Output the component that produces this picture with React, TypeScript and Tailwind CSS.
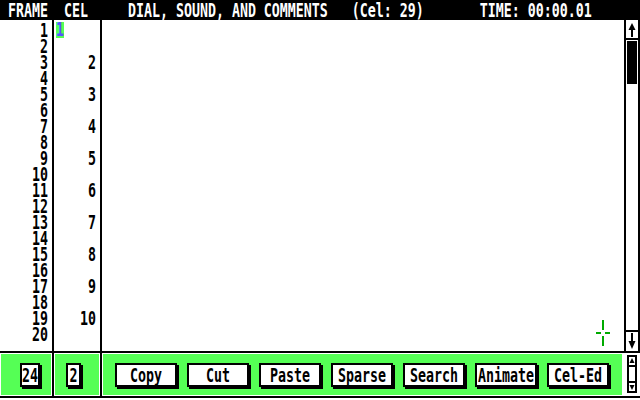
import React from 'react';

/**
 * Dial / sound / comments sheet, old bitmap-screen look
 */

const HEADER = ' FRAME  CEL     DIAL, SOUND, AND COMMENTS   (Cel: 29)       TIME: 00:00.01';
const BUTTONS = ['Copy', 'Cut', 'Paste', 'Sparse', 'Search', 'Animate', 'Cel-Ed'];
const frames = Array.from({ length: 20 }, (_, i) => i + 1);

// tall narrow bitmap-ish text: 8px cells, stretched vertically
const Glyph: React.FC<{ children: React.ReactNode; className?: string }> = ({ children, className = '' }) => (
  <span
    className={`inline-block whitespace-pre font-bold text-[13.29px] leading-[11px] scale-y-[1.45] font-['DejaVu_Sans_Mono','Liberation_Mono',monospace] ${className}`}
  >
    {children}
  </span>
);

const ArrowUp = () => (
  <svg width="12" height="20" viewBox="0 0 12 20">
    <polygon points="6,3 2.5,10 9.5,10" fill="#000" />
    <rect x="5" y="10" width="2" height="7" fill="#000" />
  </svg>
);

const ArrowDown = () => (
  <svg width="12" height="19" viewBox="0 0 12 19">
    <rect x="5" y="1" width="2" height="8" fill="#000" />
    <polygon points="2.5,9 9.5,9 6,17" fill="#000" />
  </svg>
);

const Crosshair = () => (
  <svg className="absolute left-[494px] top-[300px]" width="14" height="27" viewBox="0 0 14 27">
    <rect x="6" y="0" width="2" height="10" fill="#00aa00" />
    <rect x="6" y="16" width="2" height="10" fill="#00aa00" />
    <rect x="0" y="12" width="5" height="2" fill="#00aa00" />
    <rect x="9" y="12" width="5" height="2" fill="#00aa00" />
  </svg>
);

const BoxButton: React.FC<{ label: string; width: string }> = ({ label, width }) => (
  <div
    className={`${width} h-[24px] shrink-0 border-2 border-black bg-white shadow-[2px_2px_0_#000] flex items-center justify-center text-black`}
  >
    <Glyph>{label}</Glyph>
  </div>
);

const App: React.FC = () => {
  return (
    <div className="w-[640px] h-[400px] bg-white overflow-hidden text-black select-none">
      {/* Title bar */}
      <div className="h-[20px] bg-black text-white flex items-center">
        <Glyph>{HEADER}</Glyph>
      </div>

      {/* Sheet */}
      <div className="h-[331px] flex">
        {/* Frame column */}
        <div className="w-[54px] border-r-2 border-black pt-[2px]">
          {frames.map(n => (
            <div key={n} className="h-[16px] flex items-center justify-end pr-[4px]">
              <Glyph>{n}</Glyph>
            </div>
          ))}
        </div>

        {/* Cel column */}
        <div className="w-[48px] border-r-2 border-black pt-[2px]">
          {frames.map(n => (
            <div key={n} className="h-[16px] flex items-center">
              {n === 1 ? (
                <div className="ml-[2px] -mt-[1px] w-[8px] h-[16px] bg-[#55ff55] text-[#5555ff] flex items-center justify-center">
                  <Glyph>1</Glyph>
                </div>
              ) : n % 2 === 1 ? (
                <div className="flex-1 flex justify-end pr-[4px]">
                  <Glyph>{(n + 1) / 2}</Glyph>
                </div>
              ) : null}
            </div>
          ))}
        </div>

        {/* Comments area */}
        <div className="flex-1 relative">
          <Crosshair />
        </div>

        {/* Scrollbar */}
        <div className="w-[16px] border-x-2 border-black flex flex-col">
          <div className="h-[20px] border-b-2 border-black flex justify-center">
            <ArrowUp />
          </div>
          <div className="flex-1 pt-[1px] px-[1px]">
            <div className="h-[43px] bg-black" />
          </div>
          <div className="h-[21px] border-t-2 border-black flex justify-center">
            <ArrowDown />
          </div>
        </div>
      </div>

      {/* Tool strip */}
      <div className="h-[47px] border-y-2 border-black flex bg-white">
        <div className="w-[52px] p-px">
          <div className="h-full bg-[#55ff55] pl-[19px] pt-[9px]">
            <BoxButton label="24" width="w-[20px]" />
          </div>
        </div>
        <div className="w-[2px] bg-black" />
        <div className="w-[46px] p-px">
          <div className="h-full bg-[#55ff55] pl-[11px] pt-[9px]">
            <BoxButton label="2" width="w-[15px]" />
          </div>
        </div>
        <div className="w-[2px] bg-black" />
        <div className="w-[521px] p-px">
          <div className="h-full bg-[#55ff55] flex items-start gap-[10px] pl-[12px] pt-[9px]">
            {BUTTONS.map(b => (
              <BoxButton key={b} label={b} width="w-[62px]" />
            ))}
          </div>
        </div>
        <div className="flex-1 pl-[4px] pt-[2px]">
          <div className="w-[10px] h-[38px] border-2 border-black flex flex-col justify-between">
            <svg width="6" height="8" viewBox="0 0 6 8" className="border-b-2 border-black box-content">
              <polygon points="3,1 0.5,6 5.5,6" fill="#000" />
            </svg>
            <svg width="6" height="8" viewBox="0 0 6 8" className="border-t-2 border-black box-content">
              <polygon points="0.5,2 5.5,2 3,7" fill="#000" />
            </svg>
          </div>
        </div>
      </div>
    </div>
  );
};

export default App;
